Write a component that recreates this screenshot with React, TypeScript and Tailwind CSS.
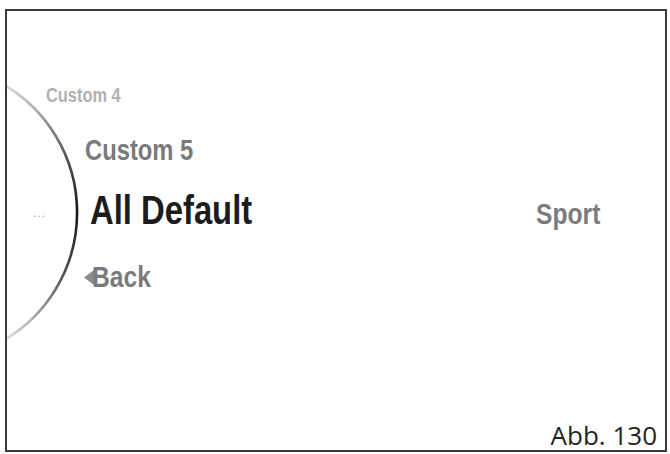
import React from 'react';

// Narrow bold face: Liberation Sans squeezed horizontally, like Arial Narrow
const menuFont = { fontFamily: '"Liberation Sans", Arial, sans-serif' };

// Curved dial on the left edge of the menu screen
function Dial() {
  return (
    <svg className="absolute left-0 top-0" width="120" height="400" viewBox="0 0 120 400">
      <defs>
        <linearGradient id="dialStroke" x1="0" y1="70" x2="0" y2="333" gradientUnits="userSpaceOnUse">
          <stop offset="0" stopColor="#e4e4e4" />
          <stop offset="0.28" stopColor="#555" />
          <stop offset="0.5" stopColor="#151515" />
          <stop offset="0.75" stopColor="#555" />
          <stop offset="1" stopColor="#e8e8e8" />
        </linearGradient>
      </defs>
      <path d="M -10 70 A 148 148 0 0 1 -10 333" fill="none" stroke="url(#dialStroke)" strokeWidth="2.6" />
    </svg>
  );
}

export default function App() {
  return (
    <div className="w-[670px] h-[454px] bg-white overflow-hidden">
      <div className="relative ml-[5px] mt-[9px] w-[662px] h-[443px] border-2 border-[#3a3a3a] overflow-hidden flex flex-col">
        <Dial />
        <span className="absolute left-[26px] top-[196px] text-[12px] leading-none text-[#a0a0a0] tracking-[1px]" style={menuFont}>
          ...
        </span>

        <div className="relative flex flex-col font-bold" style={menuFont}>
          <div className="mt-[74px] ml-[39px] text-[20px] leading-none text-[#b0b0b0]">
            <span className="inline-block origin-left scale-x-[0.82]">Custom 4</span>
          </div>
          <div className="mt-[31px] ml-[78px] text-[29px] leading-none text-[#7a7a7a]">
            <span className="inline-block origin-left scale-x-[0.82]">Custom 5</span>
          </div>
          <div className="mt-[25px] flex items-baseline">
            <span className="ml-[83px] inline-block origin-left scale-x-[0.82] text-[40px] leading-none text-[#1c1c1c]">
              All Default
            </span>
            <span className="ml-auto mr-[65px] inline-block origin-right scale-x-[0.82] text-[30px] leading-none text-[#7c7c7c]">
              Sport
            </span>
          </div>
          <div className="mt-[32px] ml-[77px] flex items-center text-[30px] leading-none text-[#7a7a7a]">
            <svg width="10" height="15" viewBox="0 0 10 15" className="mr-[-2px] mt-[1px] shrink-0">
              <polygon points="10,0 0,7.5 10,15" fill="#8a8a8a" />
            </svg>
            <span className="inline-block origin-left scale-x-[0.82]">Back</span>
          </div>
        </div>

        <div className="mt-auto mb-[2px] mr-[8px] self-end text-[26px] leading-none text-[#222]" style={{ fontFamily: '"Open Sans", sans-serif' }}>
          Abb. 130
        </div>
      </div>
    </div>
  );
}
